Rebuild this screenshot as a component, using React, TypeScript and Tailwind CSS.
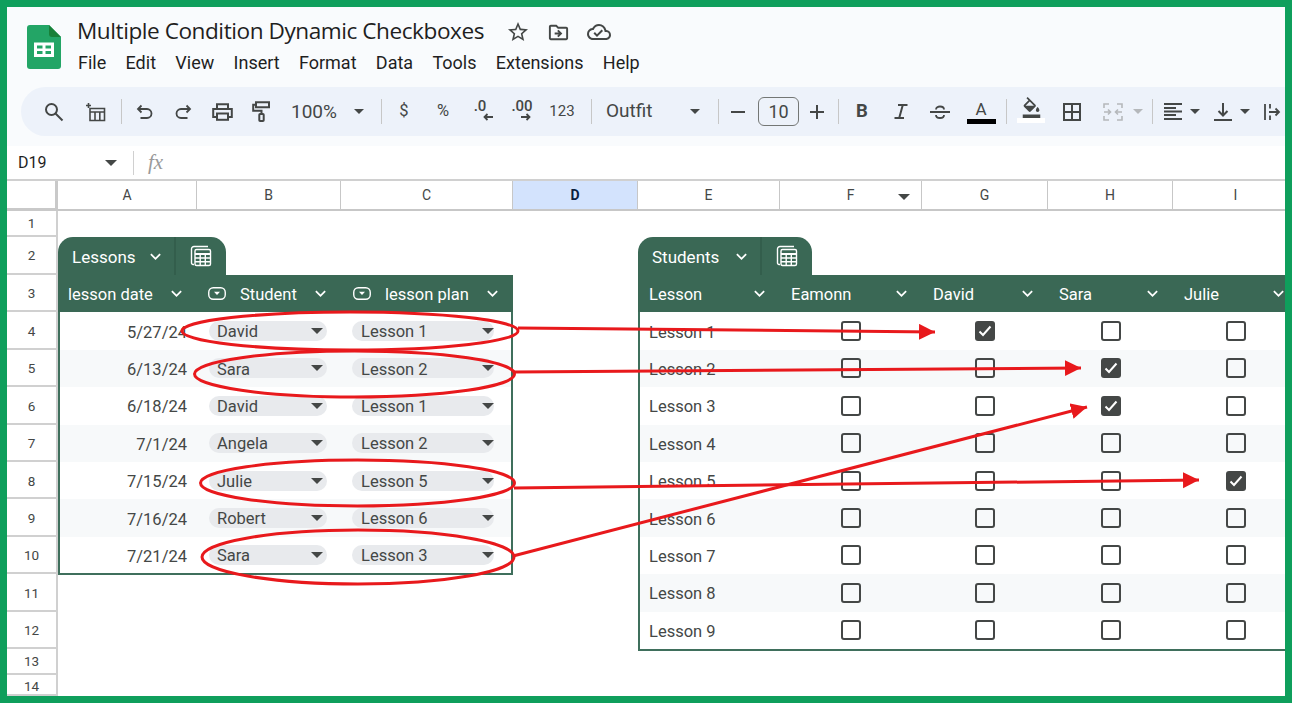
import React from "react";
import {
  MdStarBorder,
  MdOutlineDriveFileMove,
  MdOutlineCloudDone,
  MdExpandMore,
  MdFormatColorFill,
} from "react-icons/md";

const Caret = ({ big = false, className = "" }: { big?: boolean; className?: string }) => (
  <span
    className={`inline-block w-0 h-0 border-x-transparent ${big ? "border-x-[6px] border-t-[6px]" : "border-x-[5px] border-t-[5px]"} ${className || "border-t-[#444746]"}`}
  />
);

const Sep = () => <span className="block w-px h-[25px] bg-[#c7c7c7]" />;

const Slot = ({ className, children }: { className: string; children?: React.ReactNode }) => (
  <div className={`flex shrink-0 items-center justify-center h-full text-[#444746] ${className}`}>{children}</div>
);

const Ico = ({ w, h, children, stroke = "#444746", sw = 1.8 }: { w: number; h: number; children: React.ReactNode; stroke?: string; sw?: number }) => (
  <svg width={w} height={h} viewBox={`0 0 ${w} ${h}`} fill="none" stroke={stroke} strokeWidth={sw} className="shrink-0">
    {children}
  </svg>
);

const SheetsLogo = () => (
  <svg width="34" height="44" viewBox="0 0 34 44" className="shrink-0">
    <path d="M3 0H22L34 12V41a3 3 0 0 1-3 3H3a3 3 0 0 1-3-3V3a3 3 0 0 1 3-3Z" fill="#23a566" />
    <path d="M22 0L34 12H25a3 3 0 0 1-3-3Z" fill="#188038" />
    <path d="M7 17.5H27V32H7ZM10 20.5V23.5H15.5V20.5ZM18.5 20.5V23.5H24V20.5ZM10 26V29H15.5V26ZM18.5 26V29H24V26Z" fill="#fff" fillRule="evenodd" />
  </svg>
);

const TableIcon = () => (
  <svg width="22" height="22" viewBox="0 0 22 22" fill="none" stroke="#fff" strokeWidth="1.4">
    <path d="M4 19.5H3a1.5 1.5 0 0 1-1.5-1.5V4A2.5 2.5 0 0 1 4 1.5H18" />
    <rect x="5" y="4.5" width="15.5" height="16" rx="1.5" />
    <path d="M5 9H20.5" strokeWidth="2" />
    <path d="M5 13H20.5M5 16.8H20.5M10.2 9V20.5M15.3 9V20.5" />
  </svg>
);

const ChipIcon = () => (
  <svg width="18" height="13" viewBox="0 0 18 13" className="shrink-0" fill="none">
    <rect x="0.75" y="0.75" width="16.5" height="11.5" rx="4.5" stroke="#fff" strokeWidth="1.4" />
    <path d="M6 4.8H12L9 8Z" fill="#fff" />
  </svg>
);

const Chevron = () => <MdExpandMore className="text-white shrink-0" size={21} />;

const Tab = ({ title, w, icon }: { title: string; w: string; icon: string }) => (
  <div className="flex h-[38px] shrink-0">
    <div className={`flex h-full rounded-t-[15px] bg-[#3a6855] text-white text-[17px] ${w}`}>
      <div className="flex flex-1 items-center justify-between pl-[14px] pr-[8px] border-r-2 border-[#335e4c]">
        <span className="pt-[4px]">{title}</span>
        <Chevron />
      </div>
      <div className={`flex items-center justify-center ${icon}`}>
        <TableIcon />
      </div>
    </div>
  </div>
);

const Chip = ({ label, className }: { label: string; className: string }) => (
  <div className={`flex items-center justify-between h-[20px] rounded-full bg-[#e8eaed] ${className}`}>
    <span className="pt-[3px]">{label}</span>
    <Caret big />
  </div>
);

const lessons = [
  ["5/27/24", "David", "Lesson 1"],
  ["6/13/24", "Sara", "Lesson 2"],
  ["6/18/24", "David", "Lesson 1"],
  ["7/1/24", "Angela", "Lesson 2"],
  ["7/15/24", "Julie", "Lesson 5"],
  ["7/16/24", "Robert", "Lesson 6"],
  ["7/21/24", "Sara", "Lesson 3"],
];

const students: [string, number][] = [
  ["Lesson 1", 1],
  ["Lesson 2", 2],
  ["Lesson 3", 2],
  ["Lesson 4", -1],
  ["Lesson 5", 3],
  ["Lesson 6", -1],
  ["Lesson 7", -1],
  ["Lesson 8", -1],
  ["Lesson 9", -1],
];

const Checkbox = ({ checked }: { checked: boolean }) =>
  checked ? (
    <div className="flex items-center justify-center w-[20px] h-[20px] rounded-[3px] bg-[#444746]">
      <svg width="14" height="12" viewBox="0 0 14 12" fill="none">
        <path d="M1.5 6.5L5 10L12.5 1.5" stroke="#fff" strokeWidth="2" />
      </svg>
    </div>
  ) : (
    <div className="w-[20px] h-[20px] rounded-[3px] border-[2.5px] border-[#444746] bg-transparent" />
  );

const colHeaders: [string, string][] = [
  ["A", "text-[#444746]"],
  ["B", "text-[#444746]"],
  ["C", "text-[#444746]"],
  ["D", "bg-[#d3e3fd] font-bold text-[#0b1f3f]"],
  ["E", "text-[#444746]"],
  ["F", "text-[#444746]"],
  ["G", "text-[#444746]"],
  ["H", "text-[#444746]"],
  ["I", "text-[#444746]"],
];

const LessonsTable = () => (
  <div className="col-start-2 col-span-3 row-start-3 row-span-9 flex flex-col">
    <Tab title="Lessons" w="w-[168px]" icon="w-[50px]" />
    <div className="grid grid-cols-[139px_144px_172px] h-[37.4px] shrink-0 items-center bg-[#3a6855] text-white text-[16.5px]">
      <div className="flex items-center justify-between pl-[10px] pr-[10px]">
        <span className="pt-[4px]">lesson date</span>
        <Chevron />
      </div>
      <div className="flex items-center pl-[11px] pr-[10px]">
        <ChipIcon />
        <span className="ml-[14px] flex-1 pt-[4px]">Student</span>
        <Chevron />
      </div>
      <div className="flex items-center pl-[12px] pr-[10px]">
        <ChipIcon />
        <span className="ml-[14px] flex-1 pt-[4px]">lesson plan</span>
        <Chevron />
      </div>
    </div>
    <div className="flex flex-col border-x-2 border-b-2 border-[#3f6f5c] text-[16.5px] text-[#444746]">
      {lessons.map(([date, who, plan], i) => (
        <div
          key={date}
          className={`grid grid-cols-[137px_144px_172px] items-center ${i === 6 ? "h-[36.4px]" : "h-[37.4px]"} ${i % 2 ? "bg-[#f7f9fa]" : "bg-white"}`}
        >
          <div className="text-right pr-[10px] pt-[4px]">{date}</div>
          <Chip label={who} className="ml-[12px] w-[118px] pl-[8px] pr-[4px]" />
          <Chip label={plan} className="ml-[11px] w-[142px] pl-[9px] pr-0" />
        </div>
      ))}
    </div>
  </div>
);

const StudentsTable = () => (
  <div className="col-start-6 col-span-5 row-start-3 row-span-11 flex flex-col">
    <Tab title="Students" w="w-[174px]" icon="w-[50px]" />
    <div className="grid grid-cols-[142px_142px_126px_125px_126px] h-[37.4px] shrink-0 items-center bg-[#3a6855] text-white text-[16.5px]">
      {["Lesson", "Eamonn", "David", "Sara", "Julie"].map((h) => (
        <div key={h} className="flex items-center justify-between pl-[11px] pr-[10px]">
          <span className="pt-[4px]">{h}</span>
          <Chevron />
        </div>
      ))}
    </div>
    <div className="flex flex-col border-l-2 border-b-2 border-[#3f6f5c] text-[16.5px] text-[#444746]">
      {students.map(([name, col], i) => (
        <div
          key={name}
          className={`grid grid-cols-[140px_142px_126px_125px_126px] items-center h-[37.4px] ${i % 2 ? "bg-[#f7f9fa]" : "bg-white"}`}
        >
          <div className="pl-[9px] pt-[4px]">{name}</div>
          {[0, 1, 2, 3].map((c) => (
            <div key={c} className="flex justify-center">
              <Checkbox checked={c === col} />
            </div>
          ))}
        </div>
      ))}
    </div>
  </div>
);

const Toolbar = () => (
  <div className="flex items-center h-[49px] ml-[14px] pl-[14px] rounded-l-full bg-[#edf2fa] overflow-hidden text-[#444746]">
    <Slot className="w-[38px]">
      <Ico w={20} h={20} sw={2}>
        <circle cx="7.5" cy="7.5" r="5.5" />
        <path d="M11.5 11.5L18.5 18.5" />
      </Ico>
    </Slot>
    <Slot className="w-[46px]">
      <Ico w={20} h={20} sw={1.6}>
        <path d="M4 6.5H18.5V18.5H4ZM4 10H18.5M9 10V18.5M13.8 10V18.5" />
        <path d="M2.5 1V6M0 3.5H5" />
      </Ico>
    </Slot>
    <Slot className="w-[4px]"><Sep /></Slot>
    <Slot className="w-[42px]">
      <Ico w={17} h={15}>
        <path d="M5.5 1.5L2 5L5.5 8.5M2 5H11a4.5 4.5 0 0 1 0 9H4.5" />
      </Ico>
    </Slot>
    <Slot className="w-[36px]">
      <Ico w={17} h={15}>
        <path d="M11.5 1.5L15 5L11.5 8.5M15 5H6a4.5 4.5 0 0 0 0 9H12.5" />
      </Ico>
    </Slot>
    <Slot className="w-[42px]">
      <Ico w={21} h={18} sw={2}>
        <path d="M5 6V1.2H16V6M5 14H1.2V6H19.8V14H16" />
        <rect x="5" y="10.5" width="11" height="6.3" />
      </Ico>
    </Slot>
    <Slot className="w-[36px]">
      <Ico w={18} h={21} sw={2}>
        <path d="M4 1.2H17V6.3H4ZM4 3.7H1.2V9.7H9.5V13" />
        <rect x="7.3" y="13" width="4.4" height="7" rx="0.8" />
      </Ico>
    </Slot>
    <Slot className="w-[68px] pl-[12px] pt-[2px] !justify-start text-[19px]">100%</Slot>
    <Slot className="w-[24px]"><Caret /></Slot>
    <Slot className="w-[20px]"><Sep /></Slot>
    <Slot className="w-[26px] text-[16.5px]">$</Slot>
    <Slot className="w-[52px] text-[16.5px]">%</Slot>
    <Slot className="w-[28px] flex-col text-[15px] font-medium leading-[14px] -mt-[3px]">
      <span className="-ml-[6px]">.0</span>
      <div className="ml-[10px]">
        <Ico w={10} h={8}>
          <path d="M4.5 1L1.5 4L4.5 7M1.5 4H10" />
        </Ico>
      </div>
    </Slot>
    <Slot className="w-[50px] flex-col text-[15px] font-medium leading-[14px] -mt-[3px]">
      <span>.00</span>
      <div className="ml-[7px]">
        <Ico w={10} h={8}>
          <path d="M5.5 1L8.5 4L5.5 7M8.5 4H0" />
        </Ico>
      </div>
    </Slot>
    <Slot className="w-[30px] text-[15px]">123</Slot>
    <Slot className="w-[29px]"><Sep /></Slot>
    <Slot className="w-[76px] !justify-start text-[19px]">Outfit</Slot>
    <Slot className="w-[26px]"><Caret /></Slot>
    <Slot className="w-[20px]"><Sep /></Slot>
    <Slot className="w-[20px]">
      <Ico w={14} h={4} sw={2}><path d="M0 2H14" /></Ico>
    </Slot>
    <Slot className="w-[51px] pl-[10px]">
      <div className="flex items-center justify-center w-[41px] h-[29px] rounded-[6px] border border-[#747775] text-[18px]">10</div>
    </Slot>
    <Slot className="w-[36px]">
      <Ico w={14} h={14} sw={2}><path d="M0 7H14M7 0V14" /></Ico>
    </Slot>
    <Slot className="w-[6px]"><Sep /></Slot>
    <Slot className="w-[42px] text-[18.5px] font-bold">B</Slot>
    <Slot className="w-[36px]">
      <Ico w={14} h={15} sw={2}>
        <path d="M4 1H13.5M8.8 1L5.2 14M0.5 14H10" />
      </Ico>
    </Slot>
    <Slot className="w-[42px]">
      <Ico w={20} h={16} sw={1.8}>
        <path d="M0 8H20M6 5.5C6 1.5 14 1.5 14 5.5M6 11C6 15 14 15 14 11" />
      </Ico>
    </Slot>
    <Slot className="w-[40px] flex-col">
      <span className="text-[17px] leading-[17px] mt-[2px]">A</span>
      <span className="block w-[29px] h-[5px] mt-[1px] bg-black" />
    </Slot>
    <Slot className="w-[10px]"><Sep /></Slot>
    <Slot className="w-[40px] flex-col">
      <MdFormatColorFill size={21} className="-mt-[3px]" />
      <span className="block w-[28px] h-[5px] bg-white" />
    </Slot>
    <Slot className="w-[42px]">
      <Ico w={18} h={18} sw={2}>
        <path d="M1 1H17V17H1ZM9 1V17M1 9H17" />
      </Ico>
    </Slot>
    <Slot className="w-[40px]">
      <Ico w={20} h={18} stroke="#b5b8bb" sw={1.6}>
        <path d="M1 5V1H6M1 13V17H6M19 5V1H14M19 13V17H14" />
        <path d="M1 9H7.5M5 6.5L7.5 9L5 11.5M19 9H12.5M15 6.5L12.5 9L15 11.5" />
      </Ico>
    </Slot>
    <Slot className="w-[10px]"><Caret className="border-t-[#b5b8bb]" /></Slot>
    <Slot className="w-[18px]"><Sep /></Slot>
    <Slot className="w-[24px]">
      <Ico w={18} h={17} sw={1.8}>
        <path d="M0 1H18M0 5H12M0 8.5H18M0 12H12M0 16H18" />
      </Ico>
    </Slot>
    <Slot className="w-[20px]"><Caret /></Slot>
    <Slot className="w-[36px]">
      <Ico w={18} h={18} sw={2}>
        <path d="M9 0V12M4.5 8L9 12.5L13.5 8M0 17H18" />
      </Ico>
    </Slot>
    <Slot className="w-[8px]"><Caret /></Slot>
    <Slot className="w-[48px]">
      <Ico w={18} h={16} sw={1.8}>
        <path d="M1 0V16M6 0V4.5M6 11.5V16M5 8H15M11.5 4.5L15 8L11.5 11.5" />
      </Ico>
    </Slot>
  </div>
);

export default function App() {
  return (
    <div className="relative w-[1292px] h-[703px] overflow-hidden bg-[#0f9f5c] p-[7px] font-['Roboto',sans-serif]">
      <div className="flex flex-col w-full h-full overflow-hidden bg-white">
        {/* docs header */}
        <header className="flex flex-col h-[139px] shrink-0 bg-[#f9fbfd]">
          <div className="flex h-[80px] shrink-0 pt-[18px] pl-[20px]">
            <SheetsLogo />
            <div className="flex flex-col ml-[16px] -mt-[10px]">
              <div className="flex items-center h-[32px] text-[#1f1f1f]">
                <span className="w-[408px] whitespace-nowrap text-[22.6px] font-['Open_Sans',sans-serif] tracking-[-0.45px]">Multiple Condition Dynamic Checkboxes</span>
                <MdStarBorder size={24} className="ml-[21px] mt-[2px] text-[#444746]" />
                <MdOutlineDriveFileMove size={23} className="ml-[17px] mt-[2px] text-[#444746]" />
                <MdOutlineCloudDone size={24} className="ml-[17px] mt-[2px] text-[#444746]" />
              </div>
              <nav className="flex gap-[19.3px] mt-[4px] ml-[1px] text-[18px] leading-[24px] text-[#1f1f1f]">
                {["File", "Edit", "View", "Insert", "Format", "Data", "Tools", "Extensions", "Help"].map((m) => (
                  <span key={m}>{m}</span>
                ))}
              </nav>
            </div>
          </div>
          <Toolbar />
        </header>

        {/* formula bar */}
        <div className="flex items-center h-[35px] shrink-0 border-b-2 border-[#d0d0d0]">
          <span className="w-[98px] pl-[11px] text-[16px] text-[#1f1f1f]">D19</span>
          <Caret big />
          <span className="block w-px h-[24px] ml-[16px] bg-[#d0d0d0]" />
          <span className="ml-[14px] text-[21px] italic font-['Liberation_Serif',serif] text-[#9a9a9a]">fx</span>
        </div>

        {/* sheet */}
        <div className="grid grid-cols-[51px_139px_144px_172px_125px_142px_142px_126px_125px_126px] grid-rows-[30px_26px_38px_repeat(10,37.4px)_26px_21px] flex-1 text-[#444746]">
          <div className="bg-white border-r-[3px] border-b-[3px] border-[#c9c9c9]" />
          {colHeaders.map(([c, cls]) => (
            <div
              key={c}
              className={`relative flex items-center justify-center pt-[1px] text-[14px] border-r border-b-2 border-r-[#c7c7c7] border-b-[#c7c7c7] ${cls}`}
            >
              {c}
              {c === "F" && (
                <span className="absolute right-[11px] top-[13px] flex">
                  <Caret big />
                </span>
              )}
            </div>
          ))}
          {Array.from({ length: 14 }, (_, i) => (
            <div
              key={i}
              className={`col-start-1 flex items-center justify-center text-[13.5px] border-r-2 border-b-2 border-r-[#d0d0d0] border-b-[#d0d0d0] ${i === 13 ? "pt-[4px]" : i >= 3 && i <= 11 ? "pt-[2px]" : ""}`}
            >
              {i + 1}
            </div>
          ))}
          <LessonsTable />
          <StudentsTable />
        </div>
      </div>

      {/* red annotations */}
      <svg className="absolute inset-0" width="1292" height="703" viewBox="0 0 1292 703" fill="none">
        <defs>
          <marker id="head" markerUnits="userSpaceOnUse" markerWidth="18" markerHeight="18" refX="16" refY="8" orient="auto">
            <path d="M0 0L16 8L0 16Z" fill="#e8191c" />
          </marker>
        </defs>
        <g stroke="#e8191c" strokeWidth="3">
          <ellipse cx="350" cy="331" rx="168" ry="19" />
          <ellipse cx="354.5" cy="374" rx="160" ry="23" />
          <ellipse cx="357.5" cy="483" rx="157" ry="23" />
          <ellipse cx="358" cy="557" rx="156" ry="27" />
          <path d="M518 328L935 332" markerEnd="url(#head)" />
          <path d="M514 372L1081 368" markerEnd="url(#head)" />
          <path d="M514 488L1199 480" markerEnd="url(#head)" />
          <path d="M513 556L1087 407" markerEnd="url(#head)" />
        </g>
      </svg>
    </div>
  );
}
